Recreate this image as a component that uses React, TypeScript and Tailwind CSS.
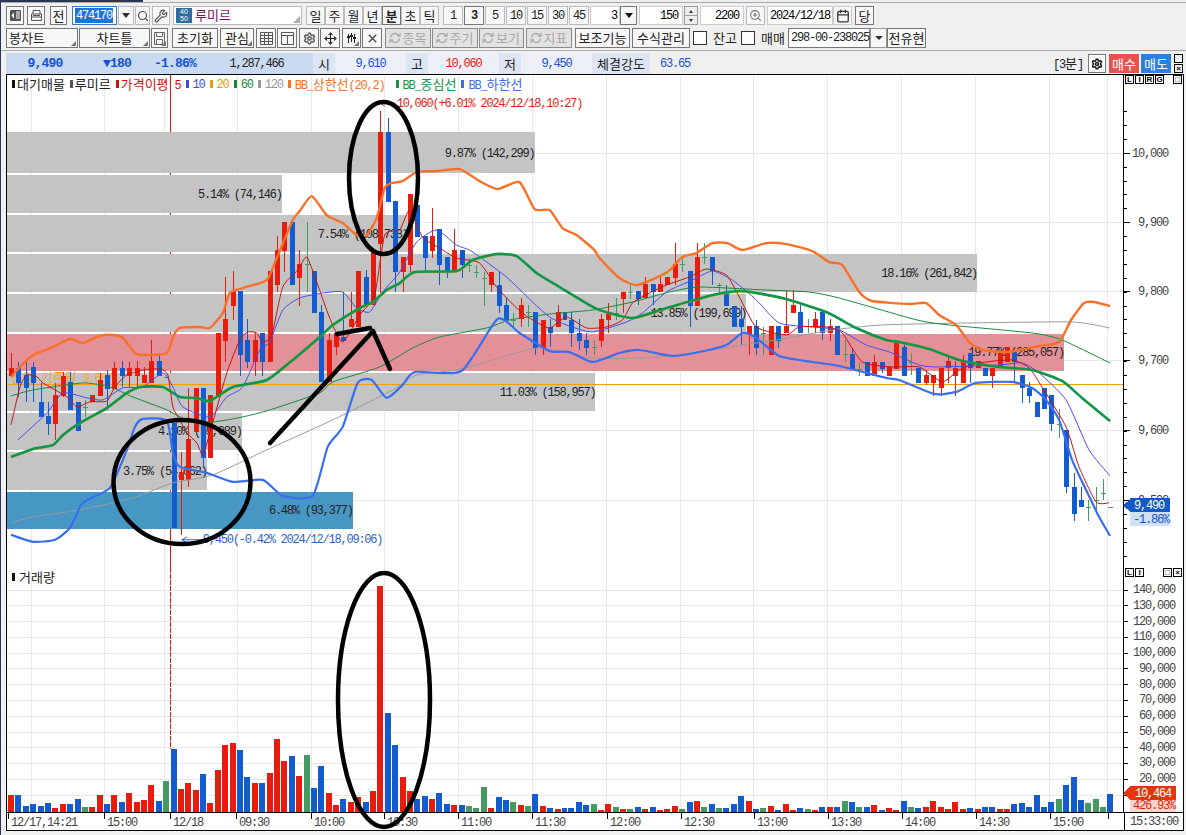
import { Fragment, type ReactNode } from 'react';
import { Calendar, Move, Search, Settings, Wrench, X, ZoomIn } from 'lucide-react';

const HANGUL = /([\uAC00-\uD7A3]+)/;

// Gulim has half-width digits and full-width hangul, so each gets its own font
function T({ children, wide }: { children: string; wide?: boolean }) {
  return (
    <>
      {children.split(HANGUL).map((part, i) =>
        HANGUL.test(part) ? (
          <span key={i} className="font-['Noto_Sans_CJK_KR',sans-serif] text-[13px] tracking-[0px]">
            {part}
          </span>
        ) : wide ? (
          <span key={i} className="font-['Liberation_Mono',monospace] text-[13px] font-bold tracking-[-0.8px]">
            {part}
          </span>
        ) : (
          <span key={i} className="font-['Liberation_Mono',monospace] text-[12px] tracking-[-1.2px]">
            {part}
          </span>
        ),
      )}
    </>
  );
}

function SvgT({ x, y, fill, children, anchor }: { x: number; y: number; fill: string; children: string; anchor?: 'end' | 'start' }) {
  return (
    <text x={x} y={y} fill={fill} textAnchor={anchor ?? 'start'}>
      {children.split(HANGUL).map((part, i) =>
        HANGUL.test(part) ? (
          <tspan key={i} className="font-['Noto_Sans_CJK_KR',sans-serif] text-[13px] tracking-[0px]">
            {part}
          </tspan>
        ) : (
          <tspan key={i} className="font-['Liberation_Mono',monospace] text-[12px] tracking-[-1.2px]">
            {part}
          </tspan>
        ),
      )}
    </text>
  );
}

function Btn({ w, className, children }: { w: string; className?: string; children?: ReactNode }) {
  return (
    <div className={`${w} relative h-full shrink-0 flex items-center justify-center whitespace-nowrap border border-[#777] bg-[#f7f7f7] text-[#222] ${className ?? ''}`}>
      {children}
    </div>
  );
}

function Corner() {
  return <span className="absolute right-[1px] bottom-[1px] w-0 h-0 border-l-[5px] border-l-transparent border-b-[5px] border-b-[#777]" />;
}

function Refresh({ label, w, ml }: { label: string; w: string; ml: string }) {
  return (
    <div className={`${w} ${ml} h-full shrink-0 flex items-center justify-center gap-[1px] border border-[#8a8a8a] bg-[#e2e2e2] text-[#a8a8a8]`}>
      <svg width="12" height="12" viewBox="0 0 12 12" fill="none" stroke="#a8a8a8" strokeWidth="1.3">
        <path d="M1.5 5.5A4.5 4.5 0 0 1 10 4M10.5 6.5A4.5 4.5 0 0 1 2 8" />
        <path d="M8 4h3V1M4 8H1v3" />
      </svg>
      <T>{label}</T>
    </div>
  );
}

const Check = ({ label, ml, w }: { label: string; ml: string; w: string }) => (
  <div className={`${ml} ${w} h-full shrink-0 flex items-center gap-[3px] whitespace-nowrap text-[#222]`}>
    <span className="w-[14px] h-[14px] shrink-0 bg-white border border-[#333]" />
    <T>{label}</T>
  </div>
);

const MiniBox = ({ children, className }: { children?: ReactNode; className?: string }) => (
  <span className={`w-[9px] h-[9px] flex items-center justify-center border border-black text-[8px] leading-none font-['Liberation_Sans',sans-serif] font-bold text-black ${className ?? ''}`}>
    {children}
  </span>
);

function TopToolbar() {
  return (
    <div className="flex h-[19px] mt-[3px] ml-[6px]">
      <Btn w="w-[18px]">
        <svg width="13" height="13" viewBox="0 0 13 13">
          <rect x="1" y="1" width="11" height="11" rx="1" fill="#555" />
          <path d="M7 3h4M7 5h4M7 7h4M7 9h4" stroke="#fff" />
          <path d="M5 3.5L2.5 6.5 5 9.5z" fill="#fff" />
        </svg>
      </Btn>
      <Btn w="w-[18px] ml-[3px]">
        <svg width="13" height="13" viewBox="0 0 13 13" fill="none" stroke="#555">
          <path d="M3 5V1.5h7V5M1.5 5h10v3h-10zM1.5 8v3.5h10V8" />
          <path d="M3 6.5h7" />
        </svg>
      </Btn>
      <Btn w="w-[17px] ml-[5px]"><T>전</T></Btn>
      <div className="w-[45px] ml-[5px] h-full shrink-0 flex items-center pl-[2px] border border-[#3b79c4] bg-white">
        <span className="bg-[#1f74d6] text-white px-[1px] leading-[14px]"><T>474170</T></span>
      </div>
      <Btn w="w-[16px] ml-[1px]" className="bg-[#e4e4e4] border-[#bbb]">
        <span className="w-0 h-0 border-l-[4px] border-r-[4px] border-t-[5px] border-l-transparent border-r-transparent border-t-[#333]" />
      </Btn>
      <Btn w="w-[15px] ml-[1px]" className="bg-[#e4e4e4] border-[#bbb]"><Search size={12} strokeWidth={2.4} color="#555" /></Btn>
      <Btn w="w-[18px] ml-[2px]" className="border-[#bbb]"><Wrench size={14} color="#555" /></Btn>
      <div className="w-[129px] ml-[3px] h-full shrink-0 relative flex items-center border border-[#bbb] bg-white">
        <span className="ml-[2px] w-[16px] h-[15px] bg-[#2f6f9f] text-white text-[7px] leading-[7px] text-center font-['Liberation_Sans',sans-serif]">40<br />50</span>
        <span className="ml-[3px] text-[#7a1055]"><T>루미르</T></span>
        <span className="absolute right-[1px] bottom-[1px] w-0 h-0 border-l-[7px] border-l-transparent border-b-[7px] border-b-[#aaa]" />
      </div>
      <div className="flex ml-[4px] h-full">
        {['일', '주', '월', '년', '분', '초', '틱'].map((p) => (
          <Btn key={p} w="w-[19px]" className={p === '분' ? 'border-[#333] bg-[#e4e4e4] font-bold' : 'border-[#bbb]'}><T>{p}</T></Btn>
        ))}
      </div>
      <div className="flex ml-[4px] h-full gap-[1px]">
        {['1', '3', '5', '10', '15', '30', '45'].map((p) => (
          <Btn key={p} w="w-[20px]" className={p === '3' ? 'border-[#333] bg-[#e4e4e4] font-bold' : 'border-[#bbb]'}><T>{p}</T></Btn>
        ))}
      </div>
      <div className="w-[30px] ml-[1px] h-full shrink-0 flex items-center justify-end pr-[2px] border border-[#ccc] bg-white"><T>3</T></div>
      <Btn w="w-[17px]" className="border-[#555]">
        <span className="w-0 h-0 border-l-[4px] border-r-[4px] border-t-[5px] border-l-transparent border-r-transparent border-t-[#111]" />
      </Btn>
      <div className="w-[44px] ml-[2px] h-full shrink-0 flex items-center justify-end pr-[4px] border border-[#ccc] bg-white"><T>150</T></div>
      <div className="w-[14px] ml-[1px] h-full shrink-0 flex flex-col border border-[#999]">
        <span className="flex-1 flex items-center justify-center bg-[#eee] border-b border-[#999]"><span className="w-0 h-0 border-l-[2px] border-r-[2px] border-b-[3px] border-l-transparent border-r-transparent border-b-[#333]" /></span>
        <span className="flex-1 flex items-center justify-center bg-[#eee]"><span className="w-0 h-0 border-l-[2px] border-r-[2px] border-t-[3px] border-l-transparent border-r-transparent border-t-[#333]" /></span>
      </div>
      <div className="w-[44px] ml-[2px] h-full shrink-0 flex items-center justify-end pr-[4px] border border-[#ccc] bg-white"><T>2200</T></div>
      <Btn w="w-[19px] ml-[2px]" className="border-[#bbb]"><ZoomIn size={13} color="#777" /></Btn>
      <div className="w-[66px] ml-[2px] h-full shrink-0 flex items-center pl-[2px] border border-[#ccc] bg-white"><T>2024/12/18</T></div>
      <Btn w="w-[19px]" className="border-[#ccc]"><Calendar size={14} color="#333" strokeWidth={2.2} /></Btn>
      <Btn w="w-[19px] ml-[3px]"><T>당</T></Btn>
    </div>
  );
}

function SecondToolbar() {
  return (
    <div className="flex h-[20px] mt-[3px] ml-[6px] text-[#222]">
      <Btn w="w-[72px]" className="justify-start pl-[2px]"><T>봉차트</T><Corner /></Btn>
      <Btn w="w-[71px] ml-[1px]"><T>차트틀</T><Corner /></Btn>
      <Btn w="w-[17px] ml-[1px]">
        <svg width="11" height="13" viewBox="0 0 11 13" fill="none" stroke="#666"><path d="M.5.5h10v12H.5zM2.5.5v4h6v-4M2.5 12.5v-5h6v5" /></svg>
        <Corner />
      </Btn>
      <Btn w="w-[46px] ml-[4px]"><T>초기화</T></Btn>
      <Btn w="w-[34px] ml-[2px]"><T>관심</T><Corner /></Btn>
      <Btn w="w-[20px] ml-[2px]">
        <svg width="13" height="13" viewBox="0 0 13 13" fill="none" stroke="#555"><path d="M.5.5h12v12H.5zM.5 3.5h12M.5 6.5h12M.5 9.5h12M4.5.5v12M8.5.5v12" /></svg>
      </Btn>
      <Btn w="w-[20px] ml-[1px]">
        <svg width="13" height="13" viewBox="0 0 13 13" fill="none" stroke="#555"><path d="M.5.5h12v12H.5zM.5 3.5h12M6.5 3.5v9" /></svg>
      </Btn>
      <Btn w="w-[20px] ml-[2px]"><Settings size={13} color="#666" strokeWidth={3} /></Btn>
      <Btn w="w-[20px] ml-[1px]"><Move size={13} color="#222" /></Btn>
      <Btn w="w-[19px] ml-[2px]">
        <svg width="11" height="13" viewBox="0 0 11 13" fill="none" stroke="#222" shapeRendering="crispEdges">
          <path d="M2.5 2v9M5.5 1v9M8.5 2v9" />
          <path d="M1 5h3M4 4h3M7 6h3" strokeWidth="2" />
        </svg>
        <Corner />
      </Btn>
      <Btn w="w-[20px] ml-[1px]"><X size={13} color="#555" strokeWidth={3} /></Btn>
      <Refresh label="종목" w="w-[46px]" ml="ml-[3px]" />
      <Refresh label="주기" w="w-[46px]" ml="ml-[1px]" />
      <Refresh label="보기" w="w-[45px]" ml="ml-[1px]" />
      <Refresh label="지표" w="w-[46px]" ml="ml-[2px]" />
      <Btn w="w-[55px] ml-[3px]"><T>보조기능</T></Btn>
      <Btn w="w-[58px] ml-[2px]"><T>수식관리</T></Btn>
      <Check label="잔고" ml="ml-[3px]" w="w-[41px]" />
      <Check label="매매" ml="ml-[7px]" w="w-[40px]" />
      <div className="w-[82px] ml-[7px] h-full shrink-0 flex items-center pl-[2px] border border-[#777] bg-white"><T>298-00-238025</T></div>
      <Btn w="w-[17px]" className="bg-[#d8d8d8] border-[#999]">
        <span className="w-0 h-0 border-l-[4px] border-r-[4px] border-t-[4px] border-l-transparent border-r-transparent border-t-[#333]" />
      </Btn>
      <Btn w="w-[39px]"><T>전유현</T></Btn>
    </div>
  );
}

function InfoBar() {
  return (
    <div className="flex h-[21px] ml-[6px] items-center">
      <div className="flex h-full w-[307px] shrink-0 items-center bg-[#c9daf1] text-[#1450d8]">
        <span className="w-[78px] text-center"><T wide>9,490</T></span>
        <span className="w-[66px] text-center"><T wide>▼180</T></span>
        <span className="w-[50px] text-center"><T wide>-1.86%</T></span>
        <span className="w-[113px] text-center text-[#222]"><T>1,287,466</T></span>
      </div>
      <span className="w-[22px] h-full flex items-center justify-center bg-[#dde5f2] text-[#222]"><T>시</T></span>
      <span className="w-[71px] h-full flex items-center justify-center bg-[#eceff6] text-[#1450d8]"><T>9,610</T></span>
      <span className="w-[22px] h-full flex items-center justify-center bg-[#dde5f2] text-[#222]"><T>고</T></span>
      <span className="w-[71px] h-full flex items-center justify-center bg-[#eceff6] text-[#e81c0c]"><T>10,060</T></span>
      <span className="w-[22px] h-full flex items-center justify-center bg-[#dde5f2] text-[#222]"><T>저</T></span>
      <span className="w-[71px] h-full flex items-center justify-center bg-[#eceff6] text-[#1450d8]"><T>9,450</T></span>
      <span className="w-[58px] h-full flex items-center justify-center bg-[#dde5f2] text-[#222]"><T>체결강도</T></span>
      <span className="w-[50px] h-full flex items-center justify-center text-[#1450d8]"><T>63.65</T></span>
      <span className="ml-[353px] w-[35px] text-[#222]"><T>[3분]</T></span>
      <span className="w-[18px] h-[19px] flex items-center justify-center border border-[#777] bg-white"><Settings size={12} color="#222" strokeWidth={3.2} /></span>
      <span className="w-[30px] h-[19px] ml-[3px] flex items-center justify-center bg-[#e9524f] text-white"><T>매수</T></span>
      <span className="w-[30px] h-[19px] ml-[2px] flex items-center justify-center bg-[#2b80de] text-white"><T>매도</T></span>
      <span className="ml-[3px] flex flex-col gap-[1px]">
        <MiniBox />
        <MiniBox>×</MiniBox>
      </span>
    </div>
  );
}

const RED = '#e81c0c';
const BLUE = '#125cd0';
const GREEN = '#459a62';
const barX = (i: number) => Math.round(11.1 + 7.385 * i);

// one string per candle: colour, high, body top, body bottom, low (page y)
const CANDLES = `r 353 368 376 376|b 362 368 383 397|b 360 375 388 402|b 362 367 383 402|b 383 402 417 417|b 402 416 424 435|r 383 395 424 440|r 372 376 396 397|b 372 382 410 410|b 402 402 431 431|g 400 407 407 417|r 395 395 402 402|r 373 380 396 396|b 370 375 389 410|r 362 368 389 389|b 361 368 376 387|r 362 368 376 387|r 361 368 376 387|r 367 375 383 383|r 340 361 383 383|b 354 361 376 376|g 376 377 377 378|b 423 423 528 528|r 452 472 480 535|r 388 439 480 487|r 388 388 432 432|b 388 388 458 468|r 395 395 458 458|r 333 333 397 397|r 277 319 341 362|r 271 291 306 320|b 291 291 355 376|b 319 340 362 368|r 333 340 362 376|b 333 333 362 376|r 271 271 362 362|r 236 250 285 292|r 222 222 251 272|b 222 222 285 285|r 250 264 278 306|g 222 264 264 292|b 271 271 313 313|b 305 312 382 382|r 333 340 382 382|r 333 333 347 355|b 292 337 341 341|r 292 319 327 327|r 271 271 327 327|b 270 277 305 305|r 252 252 305 305|r 111 132 244 293|b 118 132 202 202|b 201 201 272 292|r 257 257 272 292|r 194 194 265 272|b 205 205 237 237|b 236 236 258 272|r 208 236 251 258|b 229 229 265 285|b 257 257 272 278|r 229 250 272 272|b 250 250 265 278|g 258 265 265 272|g 265 272 272 278|g 272 278 278 306|r 272 272 285 292|b 272 285 306 313|b 298 305 320 320|g 313 320 320 327|r 298 305 319 327|g 305 312 312 327|b 312 312 348 355|r 320 320 348 355|b 319 327 333 347|r 305 312 327 327|b 312 312 320 320|b 312 320 333 347|b 319 333 341 350|b 333 340 348 355|g 340 347 347 355|r 314 319 341 347|r 303 312 320 333|g 298 313 313 320|r 292 292 299 313|g 283 292 292 299|b 291 291 299 305|r 277 284 298 298|b 284 284 292 305|r 277 284 292 292|r 277 277 285 285|r 243 264 278 285|g 257 264 264 272|b 271 271 306 327|r 243 257 306 306|g 243 257 257 264|b 257 257 271 285|g 283 285 285 293|b 285 292 306 306|b 306 306 327 327|b 306 319 327 345|r 326 326 334 355|b 320 326 348 355|g 327 333 333 355|r 326 326 355 355|b 326 326 341 348|r 290 326 333 333|r 290 305 313 313|b 305 312 333 333|g 319 326 326 333|r 312 319 327 333|b 312 312 333 340|r 319 326 333 341|b 326 326 355 355|g 340 354 354 362|b 348 354 369 369|g 362 369 369 376|b 362 362 376 376|r 355 362 376 376|b 362 362 369 373|r 367 367 376 376|r 342 342 369 369|b 342 347 376 376|g 353 362 362 375|b 368 368 383 383|r 370 375 383 385|r 375 375 383 396|r 368 368 388 396|r 355 361 368 383|r 361 368 376 396|r 355 362 383 383|b 353 353 368 383|r 361 361 368 368|b 368 368 376 376|r 368 368 376 388|r 353 353 368 368|r 347 347 362 362|b 352 352 362 383|b 375 375 388 403|b 382 388 396 403|b 402 402 417 417|b 388 388 409 409|b 395 395 424 431|g 409 424 424 438|b 430 430 487 493|b 473 487 514 521|b 487 500 507 507|g 500 507 507 521|g 487 500 500 514|g 479 493 493 500|g 507 507 507 507`;

const COLORS: Record<string, string> = { r: RED, b: BLUE, g: GREEN };

const VOLUME = `r17 b17 b6 b8 b6 b9 r4 r8 b8 b13 g5 r5 r17 b8 r17 b10 r19 r10 r12 r27 b11 g31 b63 r23 r29 r22 b38 r9 r42 r67 r69 b62 b35 r29 b29 r39 r73 r51 b56 r36 g57 b24 b46 r19 r7 b13 r10 r15 b10 r21 r226 b99 b67 r35 r21 b13 b16 r13 b19 b8 r7 b7 g6 g4 g25 r4 b15 b12 g10 r7 g6 b18 r6 b4 r3 b4 b4 b10 b7 g8 r2 r8 g5 r3 g3 b5 r3 b5 r2 r3 r6 g3 b10 r11 g5 b8 g4 b4 b8 b16 r11 b3 g4 r6 b2 r8 r2 b4 g3 r2 b5 r5 b5 g11 b10 g5 b5 r7 b2 r4 r2 b11 g5 b4 r5 r11 r5 r3 r10 r3 b4 r3 b5 b5 r3 r3 b8 b9 b5 b17 b5 b10 g13 b27 b35 b12 g9 g13 g5 b18`.split(' ');

const TIME_GRID = [31, 104, 164, 237, 311, 384, 458, 532, 607, 681, 754, 828, 902, 976, 1050, 1108];
const PRICE_GRID = [153, 222, 291, 360, 430, 500];
const VOL_GRID = [591, 606, 622, 638, 654, 669, 685, 701, 717, 733, 748, 764, 780, 796];

const PROFILE = [
  { y: 132, h: 41, w: 535, label: '9.87% (142,299)' },
  { y: 175, h: 38, w: 282, label: '5.14% (74,146)' },
  { y: 215, h: 37, w: 408, label: '7.54% (108,738)' },
  { y: 254, h: 38, w: 978, label: '18.16% (261,842)' },
  { y: 294, h: 38, w: 747, label: '13.85% (199,699)' },
  { y: 334, h: 37, w: 1065, label: '19.77% (285,057)', fill: '#e39098' },
  { y: 373, h: 38, w: 596, label: '11.03% (158,957)' },
  { y: 413, h: 37, w: 242, label: '4.10% (59,089)' },
  { y: 452, h: 38, w: 207, label: '3.75% (54,062)' },
  { y: 492, h: 37, w: 353, label: '6.48% (93,377)', fill: '#4797c5' },
];

const BB_UP = '11,377 20,367 33,355 43,351 53,347 70,339 83,343 100,336 113,335 123,338 135,353 143,355 167,353 173,337 180,328 200,327 210,328 223,313 230,293 243,288 267,280 277,258 293,220 300,211 312,196 327,215 343,223 357,235 367,235 377,218 385,188 392,183 403,181 417,172 437,171 460,169 480,181 498,189 520,182 535,209 550,210 563,228 577,235 595,250 600,258 620,278 638,285 668,272 683,257 697,253 713,243 728,243 743,250 767,243 787,244 813,251 830,262 843,265 860,292 873,301 910,304 927,303 940,315 957,325 970,342 983,350 1010,352 1040,346 1060,342 1072,320 1085,303 1095,302 1111,306';
const BB_MID = '11,457 33,449 53,445 63,435 80,423 107,408 127,393 140,387 163,387 180,397 197,398 210,401 233,387 267,380 293,360 320,337 333,325 360,308 373,302 387,290 400,283 415,272 457,271 473,260 497,254 517,256 537,273 560,287 590,305 600,310 633,318 667,308 713,295 743,291 783,298 827,312 857,328 887,340 900,342 930,349 960,360 1000,367 1033,370 1063,381 1083,398 1111,421';
const BB_LOW = '11,535 33,542 55,540 70,528 83,503 110,488 127,450 135,427 143,419 167,421 173,453 180,467 207,473 233,482 263,480 283,496 313,496 328,447 343,427 358,383 372,380 387,398 403,385 415,372 462,371 498,319 520,333 550,351 570,352 593,362 620,353 640,350 673,356 700,352 727,345 743,333 757,338 780,356 813,362 840,366 887,378 900,380 935,394 957,392 977,383 1013,382 1033,388 1047,400 1060,420 1073,460 1087,490 1100,517 1111,536';
const MA5 = '11,425 20,387 27,375 37,377 43,383 67,397 77,407 90,402 107,401 115,387 127,375 143,370 160,369 168,375 173,407 180,420 187,433 197,443 203,455 210,433 227,373 240,340 248,332 257,333 263,342 272,335 283,287 298,270 307,257 317,282 330,318 343,342 360,315 375,295 385,235 400,230 410,210 423,237 440,248 457,258 480,263 497,287 517,308 530,318 550,328 567,317 587,328 607,327 623,320 633,303 650,293 667,285 690,277 707,269 727,275 740,297 757,327 787,335 800,327 827,327 843,333 863,362 893,367 920,367 943,382 960,370 980,363 1013,360 1030,368 1043,387 1067,427 1080,467 1097,502 1110,503';
const MA10 = '18,440 47,413 63,393 87,398 103,400 123,388 143,387 163,373 173,387 183,407 210,417 227,397 243,387 260,350 270,342 283,310 300,298 323,293 343,292 357,308 370,312 383,292 400,272 417,242 437,230 457,245 470,250 487,262 507,277 533,302 550,317 567,325 593,332 627,322 643,313 667,292 693,280 713,271 733,280 757,300 780,323 813,327 840,330 867,345 890,352 920,365 940,367 1000,365 1023,363 1040,373 1067,400 1090,450 1111,476';
const MA60 = '11,396 33,390 83,383 110,387 133,397 167,410 187,420 213,422 243,417 270,410 320,393 333,382 380,367 413,348 440,337 487,328 510,320 550,314 593,310 633,302 670,292 700,287 767,290 810,292 840,298 918,320 950,325 1033,333 1063,340 1111,363';
const MA120 = '11,523 33,517 80,510 133,498 173,483 213,475 267,450 333,420 393,390 417,375 457,370 500,358 540,348 593,358 647,358 693,353 743,345 777,340 833,330 883,325 967,323 1073,322 1111,328';

// rounds the traced points a little, without overshooting the plateaus
function smooth(points: string) {
  const p = points.split(' ').map((s) => s.split(',').map(Number));
  let d = `M${p[0][0]} ${p[0][1]}`;
  for (let i = 0; i < p.length - 1; i++) {
    const a = p[Math.max(i - 1, 0)];
    const b = p[i];
    const c = p[i + 1];
    const e = p[Math.min(i + 2, p.length - 1)];
    d += `C${b[0] + (c[0] - a[0]) / 10} ${b[1] + (c[1] - a[1]) / 10} ${c[0] - (e[0] - b[0]) / 10} ${c[1] - (e[1] - b[1]) / 10} ${c[0]} ${c[1]}`;
  }
  return d;
}

const LEGEND: { mark: string; label: string; color: string; gap: string }[] = [
  { mark: '#111', label: '대기매물', color: '#222', gap: 'gap-[2px]' },
  { mark: '#555', label: '루미르', color: '#222', gap: 'gap-[2px]' },
  { mark: '#d01010', label: '가격이평 5', color: '#d01010', gap: 'gap-[2px]' },
  { mark: '#3a4cf0', label: '10', color: '#3a4cf0', gap: 'gap-[4px]' },
  { mark: '#e89a10', label: '20', color: '#e89a10', gap: 'gap-[4px]' },
  { mark: '#12893c', label: '60', color: '#12893c', gap: 'gap-[4px]' },
  { mark: '#999', label: '120', color: '#999', gap: 'gap-[4px]' },
  { mark: '#f97028', label: 'BB_상한선(20,2) ', color: '#f97028', gap: 'gap-[4px]' },
  { mark: '#10964a', label: 'BB_중심선', color: '#10964a', gap: 'gap-[4px]' },
  { mark: '#3a6ef0', label: 'BB_하한선', color: '#3a6ef0', gap: 'gap-[4px]' },
];

function PriceChart() {
  return (
    <svg width="1117" height="493" viewBox="7 75 1117 493" className="block" shapeRendering="crispEdges">
      {TIME_GRID.map((x) => <line key={x} x1={x + 0.5} x2={x + 0.5} y1={75} y2={568} stroke="#e8e8e8" />)}
      {PRICE_GRID.map((y) => <line key={y} x1={7} x2={1124} y1={y + 0.5} y2={y + 0.5} stroke="#e8e8e8" />)}
      <line x1={170.5} x2={170.5} y1={75} y2={568} stroke="#f01010" />
      {PROFILE.map((p) => <rect key={p.y} x={7} y={p.y} width={p.w - 7} height={p.h} fill={p.fill ?? '#c4c4c4'} />)}
      {PROFILE.map((p) => (
        <SvgT key={p.y} x={p.w} y={p.y + p.h / 2 + 4} fill="#222" anchor="end">{p.label}</SvgT>
      ))}
      <SvgT x={11} y={382} fill="#f0a838">전일 기준일 9,667</SvgT>
      <line x1={7} x2={1124} y1={384.5} y2={384.5} stroke="#f39c12" />
      {CANDLES.split('|').map((c, i) => {
        const [k, hi, top, bot, lo] = c.split(' ');
        const x = barX(i);
        const color = COLORS[k];
        return (
          <Fragment key={i}>
            <line x1={x + 0.5} x2={x + 0.5} y1={+hi} y2={+lo} stroke={color} />
            {top === bot ? (
              <line x1={x - 2} x2={x + 3} y1={+top + 0.5} y2={+top + 0.5} stroke={color} />
            ) : (
              <rect x={x - 2} y={+top} width={5} height={+bot - +top} fill={color} />
            )}
          </Fragment>
        );
      })}
      <g fill="none" strokeLinejoin="round" shapeRendering="auto">
        <path d={smooth(MA120)} stroke="#9a9a9a" />
        <path d={smooth(MA60)} stroke="#178a3c" />
        <path d={smooth(MA10)} stroke="#4a4af0" />
        <path d={smooth(MA5)} stroke="#c81010" />
        <path d={smooth(BB_MID)} stroke="#e89a10" transform="translate(0.5 1)" />
        <path d={smooth(BB_UP)} stroke="#f97028" strokeWidth="2.4" />
        <path d={smooth(BB_LOW)} stroke="#3a6ef0" strokeWidth="2.2" />
        <path d={smooth(BB_MID)} stroke="#10964a" strokeWidth="2.6" />
      </g>
      <path d="M381 103l4-3M381 103l4 3M381 103h15" stroke={RED} fill="none" shapeRendering="auto" />
      <SvgT x={397} y={107} fill="#e81c0c">10,060(+6.01% 2024/12/18,10:27)</SvgT>
      <path d="M182 540l5-3M182 540l5 3M182 540h21" stroke="#2a62c8" fill="none" shapeRendering="auto" />
      <SvgT x={203} y={543} fill="#2a62c8">9,450(-0.42% 2024/12/18,09:06)</SvgT>
    </svg>
  );
}

function PriceAxis() {
  const minor: number[] = [];
  for (let y = 111; y < 568; y += 13.9) minor.push(Math.round(y));
  return (
    <svg width="59" height="493" viewBox="1124 75 59 493" className="block" shapeRendering="crispEdges">
      {minor.map((y) => <line key={y} x1={1124} x2={1127} y1={y} y2={y} stroke="#000" />)}
      {PRICE_GRID.map((y) => <line key={y} x1={1124} x2={1130} y1={y + 0.5} y2={y + 0.5} stroke="#000" />)}
      {[['10,000', 157], ['9,900', 226], ['9,800', 295], ['9,700', 364], ['9,600', 434], ['9,500', 504]].map(([l, y]) => (
        <SvgT key={l} x={1168} y={y as number} fill="#444" anchor="end">{l as string}</SvgT>
      ))}
      <path d="M1123 505.5l7-6v12z" fill="#1459c8" />
      <rect x={1130} y={498} width={40} height={14} fill="#1459c8" />
      <SvgT x={1134} y={509} fill="#fff">9,490</SvgT>
      <rect x={1130} y={512} width={40} height={14} fill="#cfe0f7" />
      <SvgT x={1133} y={523} fill="#1450d8">-1.86%</SvgT>
    </svg>
  );
}

function VolumeChart() {
  return (
    <svg width="1117" height="244" viewBox="7 569 1117 244" className="block" shapeRendering="crispEdges">
      {TIME_GRID.map((x) => <line key={x} x1={x + 0.5} x2={x + 0.5} y1={569} y2={813} stroke="#e8e8e8" />)}
      {VOL_GRID.map((y) => <line key={y} x1={7} x2={1124} y1={y + 0.5} y2={y + 0.5} stroke="#e8e8e8" />)}
      <line x1={170.5} x2={170.5} y1={569} y2={750} stroke="#f01010" strokeDasharray="5 1" />
      {VOLUME.map((v, i) => {
        const h = +v.slice(1);
        return <rect key={i} x={barX(i) - 3} y={813 - h} width={6} height={h} fill={COLORS[v[0]]} />;
      })}
    </svg>
  );
}

function VolumeAxis() {
  const labels = ['140,000', '130,000', '120,000', '110,000', '100,000', '90,000', '80,000', '70,000', '60,000', '50,000', '40,000', '30,000', '20,000'];
  return (
    <svg width="59" height="244" viewBox="1124 569 59 244" className="block" shapeRendering="crispEdges">
      {VOL_GRID.map((y) => <line key={y} x1={1124} x2={1128} y1={y + 0.5} y2={y + 0.5} stroke="#000" />)}
      {labels.map((l, i) => (
        <SvgT key={l} x={1175} y={Math.round(594 + i * 15.75)} fill="#444" anchor="end">{l}</SvgT>
      ))}
      <path d="M1123 794l7-6v12z" fill="#e8340c" />
      <rect x={1130} y={787} width={46} height={14} fill="#e8340c" />
      <SvgT x={1135} y={798} fill="#fff">10,464</SvgT>
      <rect x={1130} y={801} width={46} height={12} fill="#fbd5cd" />
      <SvgT x={1133} y={810} fill="#e81c0c">426.93%</SvgT>
    </svg>
  );
}

const TIMES: [string, number][] = [['12/17,14:21', 8], ['15:00', 104], ['12/18', 170], ['09:30', 236], ['10:00', 311], ['10:30', 384], ['11:00', 458], ['11:30', 532], ['12:00', 607], ['12:30', 681], ['13:00', 754], ['13:30', 828], ['14:00', 902], ['14:30', 976], ['15:00', 1050], ['', 1108]];

function TimeAxis() {
  return (
    <svg width="1117" height="16" viewBox="7 814 1117 16" className="block" shapeRendering="crispEdges">
      {TIMES.map(([l, x]) => (
        <Fragment key={x}>
          <line x1={x + 0.5} x2={x + 0.5} y1={814} y2={820} stroke="#000" />
          {l && <SvgT x={x + 3} y={827} fill="#444">{l}</SvgT>}
        </Fragment>
      ))}
    </svg>
  );
}

function Annotations() {
  return (
    <svg width="1186" height="835" viewBox="0 0 1186 835" className="absolute left-0 top-0 pointer-events-none" fill="none" stroke="#000" strokeWidth="4.5" strokeLinecap="round" strokeLinejoin="round">
      <ellipse cx="383.5" cy="178" rx="34.5" ry="76" />
      <ellipse cx="182" cy="482" rx="68.5" ry="62" />
      <ellipse cx="384" cy="700" rx="46" ry="127" />
      <path d="M270 443L373 331L390 369" />
      <path d="M337 334L370 328" />
    </svg>
  );
}

export default function App() {
  return (
    <div className="relative w-[1186px] h-[835px] overflow-hidden bg-[#f0f0f0] text-[12px]">
      <div className="absolute left-0 top-0 h-full w-[1px] bg-[#2a3557]" />
      <div className="h-[3px] border-b border-[#aaa] bg-[#eee]">
        <div className="w-[143px] h-[2px] bg-[#2a3557]" />
      </div>
      <TopToolbar />
      <SecondToolbar />
      <div className="mt-[2px] mb-[2px] h-[1px] bg-[#aaa]" />
      <InfoBar />
      <div className="ml-[6px] w-[1178px] h-[757px] border border-black bg-white flex flex-col relative">
        <div className="flex h-[493px] relative">
          <PriceChart />
          <div className="border-l border-black relative">
            <PriceAxis />
            <div className="absolute left-[1px] top-0 flex gap-[1px]">
              <MiniBox>L</MiniBox><MiniBox>I</MiniBox><MiniBox>R</MiniBox><MiniBox>G</MiniBox>
            </div>
            <div className="absolute right-[1px] top-0"><MiniBox>□</MiniBox></div>
          </div>
          <div className="absolute left-[5px] top-[2px] flex items-center gap-[5px] h-[14px]">
            {LEGEND.map((l) => (
              <div key={l.label} className={`flex items-center whitespace-pre ${l.gap}`} style={{ color: l.color }}>
                <span className="w-[3px] h-[8px]" style={{ background: l.mark }} />
                <span><T>{l.label}</T></span>
              </div>
            ))}
          </div>
        </div>
        <div className="h-[1px] bg-[#888]" />
        <div className="flex h-[244px] relative">
          <VolumeChart />
          <div className="border-l border-black relative">
            <VolumeAxis />
            <div className="absolute left-[1px] top-0 flex gap-[1px]">
              <MiniBox>L</MiniBox><MiniBox>I</MiniBox>
            </div>
            <div className="absolute right-[1px] top-0 flex gap-[1px]">
              <MiniBox>□</MiniBox><MiniBox>×</MiniBox>
            </div>
          </div>
          <div className="absolute left-[5px] top-[2px] flex items-center gap-[2px] h-[14px] text-[#222]">
            <span className="w-[3px] h-[8px] bg-[#111]" />
            <T>거래량</T>
          </div>
        </div>
        <div className="flex flex-1 border-t border-black">
          <TimeAxis />
          <div className="flex-1 border-l border-black flex items-center justify-center text-[#444]">
            <T>15:33:00</T>
          </div>
        </div>
      </div>
      <Annotations />
    </div>
  );
}
